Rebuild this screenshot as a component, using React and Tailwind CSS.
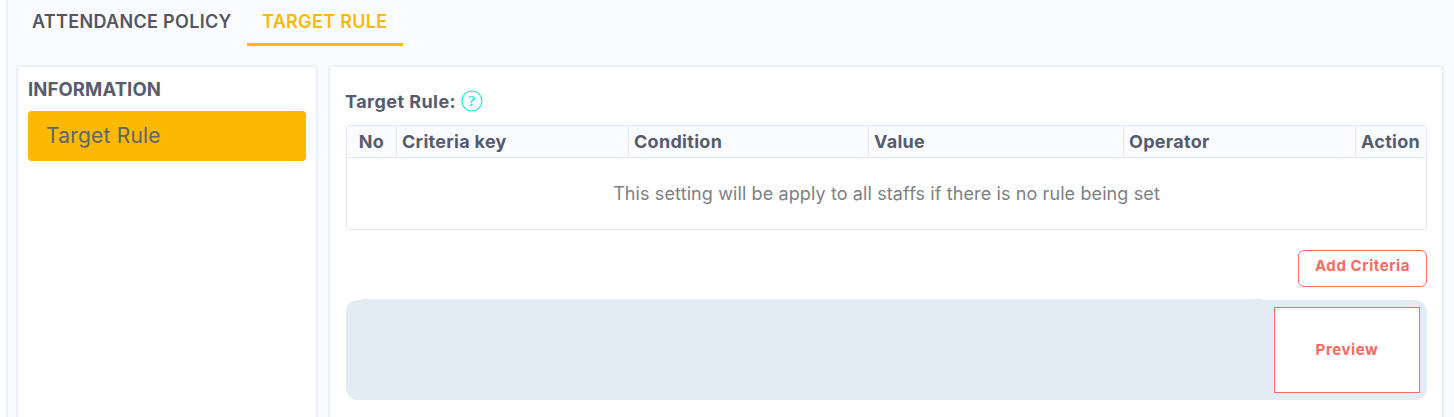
export default function App() {
  const cols = [
    ["No", "w-[50px] justify-center"],
    ["Criteria key", "w-[232px] pl-[5px]"],
    ["Condition", "w-[240px] pl-[5px]"],
    ["Value", "w-[255px] pl-[5px]"],
    ["Operator", "w-[232px] pl-[5px]"],
    ["Action", "flex-1 pl-[5px]"],
  ];
  return (
    <div className="h-[417px] overflow-hidden bg-white font-['Inter',sans-serif]">
      <div className="ml-[6px] h-full border-l-2 border-[#eef2fb] bg-[#f9fbff] pl-[8px] pr-[10px]">
        <div className="flex h-[46px] text-[18px] font-semibold leading-[44px] tracking-[0.32px]">
          <div className="w-[231px] pl-[16px] text-[#55565f]">ATTENDANCE POLICY</div>
          <div className="h-[46px] w-[156px] border-b-[3px] border-[#fdb900] pl-[15px] text-[#fdb900]">TARGET RULE</div>
        </div>
        <div className="mt-[19px] flex gap-[10px]">
          <div className="h-[360px] w-[302px] rounded-t border-2 border-b-0 border-[#eaf0fb] bg-white px-[10px]">
            <div className="mt-[11px] text-[18.5px] font-bold leading-[22px] tracking-[0.1px] text-[#565c6e]">INFORMATION</div>
            <div className="mt-[11px] flex h-[50px] items-center rounded bg-[#fdb900] pl-[18px] text-[21px] tracking-[0.2px] text-[#5f6470]">Target Rule</div>
          </div>
          <div className="h-[360px] flex-1 rounded-t border-2 border-b-0 border-[#eaf0fb] bg-white pl-[16px] pr-[15px]">
            <div className="mt-[22px] flex h-[24px] items-center gap-[5px] text-[18px] font-bold tracking-[0.45px] text-[#565c6e]">
              <span className="-ml-px">Target Rule:</span>
              <svg width="22" height="22" viewBox="0 0 22 22" fill="none">
                <circle cx="11" cy="11" r="10" stroke="#1de9d5" strokeWidth="1.2" />
                <text x="11" y="16" textAnchor="middle" fontSize="15" fontFamily="Liberation Serif, serif" fill="#1de9d5">?</text>
              </svg>
            </div>
            <div className="mt-[12px] h-[105px] rounded-[3px] border border-[#e2e8f6]">
              <div className="flex h-[32px] border-b border-[#e2e8f6] bg-[#f9fbff] text-[18px] font-bold tracking-[0.3px] text-[#565c6e]">
                {cols.map(([t, c], i) => (
                  <div key={t} className={`flex items-center ${c} ${i < 5 ? "border-r border-[#e2e8f6]" : ""}`}>{t}</div>
                ))}
              </div>
              <div className="flex h-[71px] items-center justify-center text-[18px] tracking-[0.11px] text-[#7d7f85]">
                This setting will be apply to all staffs if there is no rule being set
              </div>
            </div>
            <div className="mt-[20px] flex justify-end">
              <button className="h-[37px] w-[129px] rounded-[6px] border border-[#ff6a5f] bg-white pb-[5px] text-[15px] font-bold tracking-[0.6px] text-[#ff6a5f]">Add Criteria</button>
            </div>
            <div className="relative mt-[13px] flex h-[100px] items-center justify-end rounded-[12px] bg-[#e3ebf3] pr-[7px]">
              <div className="absolute top-[-1px] left-[16px] h-[1px] w-[900px] bg-[#e3ebf3]" />
              <button className="h-[86px] w-[146px] border border-[#ff6a5f] bg-white text-[15px] font-bold tracking-[0.6px] text-[#ff6a5f]">Preview</button>
            </div>
          </div>
        </div>
      </div>
    </div>
  );
}
